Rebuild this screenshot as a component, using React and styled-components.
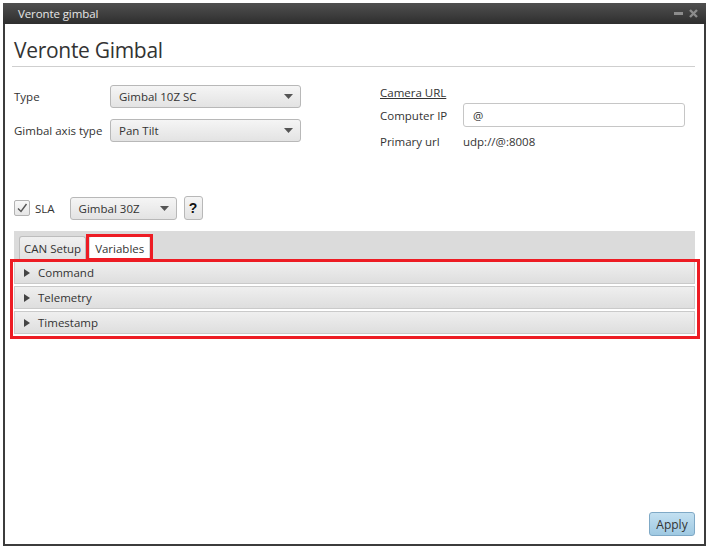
import styled, { createGlobalStyle } from "styled-components";

const GlobalStyle = createGlobalStyle`
  html, body {
    margin: 0;
    padding: 0;
    background: #ffffff;
  }
  body {
    font-family: "Open Sans", "Noto Sans", sans-serif;
    color: #333;
  }
`;

const Caret = () => (
  <svg width="9" height="5" viewBox="0 0 9 5">
    <path d="M0 0 L9 0 L4.5 5 Z" fill="#555" />
  </svg>
);

const Arrow = () => (
  <svg width="6" height="8" viewBox="0 0 6 8">
    <path d="M0 0 L6 4 L0 8 Z" fill="#444" />
  </svg>
);

const Check = () => (
  <svg width="12" height="12" viewBox="0 0 12 12">
    <path d="M2 6.5 L5 9.5 L10.5 2" fill="none" stroke="#555" strokeWidth="1.4" />
  </svg>
);

const CloseIcon = () => (
  <svg width="9" height="9" viewBox="0 0 9 9">
    <path d="M1 1 L8 8 M8 1 L1 8" stroke="#8c8c8c" strokeWidth="2.4" />
  </svg>
);

const Select = ({ value, width }) => (
  <SelectBox $width={width}>
    <span>{value}</span>
    <Caret />
  </SelectBox>
);

const App = () => {
  const panes = ["Command", "Telemetry", "Timestamp"];
  return (
    <>
      <GlobalStyle />
      <Page>
        <Window>
          <TitleBar>
            <TitleText>Veronte gimbal</TitleText>
            <WindowControls>
              <Minimize />
              <CloseIcon />
            </WindowControls>
          </TitleBar>
          <Body>
            <Heading>Veronte Gimbal</Heading>
            <Divider />
            <FormRow>
              <LeftForm>
                <Label>Type</Label>
                <Select value="Gimbal 10Z SC" width={191} />
                <Label>Gimbal axis type</Label>
                <Select value="Pan Tilt" width={191} />
              </LeftForm>
              <RightForm>
                <LinkLabel>Camera URL</LinkLabel>
                <span />
                <Label>Computer IP</Label>
                <TextInput>@</TextInput>
                <Label>Primary url</Label>
                <Label>udp://@:8008</Label>
              </RightForm>
            </FormRow>
            <SlaRow>
              <CheckBox>
                <Check />
              </CheckBox>
              <Label>SLA</Label>
              <Spacer />
              <Select value="Gimbal 30Z" width={107} />
              <HelpButton>?</HelpButton>
            </SlaRow>
            <TabPane>
              <TabHeader>
                <Tab>CAN Setup</Tab>
                <Tab $selected>
                  Variables
                  <Highlight $inset="-3px -5px -2px -5px" />
                </Tab>
              </TabHeader>
              <Accordion>
                {panes.map((p) => (
                  <Titled key={p}>
                    <Arrow />
                    <span>{p}</span>
                  </Titled>
                ))}
                <Highlight $inset="-2px -5px -5px -4px" />
              </Accordion>
            </TabPane>
            <Footer>
              <ApplyButton>Apply</ApplyButton>
            </Footer>
          </Body>
        </Window>
      </Page>
    </>
  );
};

const Page = styled.div`
  width: 709px;
  height: 550px;
  padding: 3px 3px 4px 3px;
  box-sizing: border-box;
`;

const Window = styled.div`
  height: 543px;
  border: 2px solid #3c3c3c;
  border-top: none;
  box-sizing: border-box;
  display: flex;
  flex-direction: column;
  background: #fff;
`;

const TitleBar = styled.div`
  height: 21px;
  margin: 0 -2px;
  background: linear-gradient(#505050, #2e2e2e);
  display: flex;
  align-items: center;
  justify-content: space-between;
  padding: 0 8px 0 15px;
`;

const TitleText = styled.span`
  color: #e6e6e6;
  font-size: 11.5px;
  letter-spacing: -0.1px;
`;

const WindowControls = styled.div`
  display: flex;
  align-items: center;
  gap: 6px;
`;

const Minimize = styled.div`
  width: 9px;
  height: 3px;
  background: #8c8c8c;
`;

const Body = styled.div`
  flex: 1;
  display: flex;
  flex-direction: column;
  padding: 12px 9px 8px 9px;
`;

const Heading = styled.h1`
  margin: 0;
  font-size: 21px;
  font-weight: 400;
  color: #333;
  line-height: 28px;
  letter-spacing: -0.3px;
`;

const Divider = styled.div`
  height: 1px;
  background: #cfcfcf;
  margin: 2px 0 0 -2px;
`;

const FormRow = styled.div`
  display: flex;
  margin-top: 18px;
`;

const LeftForm = styled.div`
  display: grid;
  grid-template-columns: 96px auto;
  row-gap: 11px;
  align-items: center;
  width: 366px;
  align-content: start;
`;

const RightForm = styled.div`
  display: grid;
  grid-template-columns: 83px 222px;
  grid-template-rows: 19px 24px 26px;
  row-gap: 1px;
  align-items: center;
  margin-top: -2px;
`;

const Label = styled.span`
  font-size: 11.5px;
  color: #333;
  white-space: nowrap;
`;

const LinkLabel = styled(Label)`
  text-decoration: underline;
`;

const SelectBox = styled.div`
  width: ${(p) => p.$width}px;
  height: 23px;
  box-sizing: border-box;
  border: 1px solid #b8b8b8;
  border-radius: 3px;
  background: linear-gradient(#f5f5f5, #e3e3e3);
  display: flex;
  align-items: center;
  justify-content: space-between;
  padding: 0 7px 0 8px;
  font-size: 11.5px;
  color: #333;
`;

const TextInput = styled.div`
  height: 24px;
  box-sizing: border-box;
  border: 1px solid #c6c6c6;
  border-radius: 3px;
  background: #fff;
  font-size: 11.5px;
  padding: 0 9px;
  display: flex;
  align-items: center;
`;

const SlaRow = styled.div`
  display: flex;
  align-items: center;
  margin-top: 42px;
  gap: 5px;
`;

const CheckBox = styled.div`
  width: 16px;
  height: 16px;
  box-sizing: border-box;
  border: 1px solid #b3b3b3;
  border-radius: 2px;
  background: linear-gradient(#f8f8f8, #e6e6e6);
  display: flex;
  align-items: center;
  justify-content: center;
`;

const Spacer = styled.div`
  width: 5px;
`;

const HelpButton = styled.div`
  width: 19px;
  height: 24px;
  box-sizing: border-box;
  margin-left: 2px;
  border: 1px solid #b8b8b8;
  border-radius: 3px;
  background: linear-gradient(#f5f5f5, #e3e3e3);
  display: flex;
  align-items: center;
  justify-content: center;
  font-family: "Liberation Sans", sans-serif;
  font-weight: 700;
  font-size: 14px;
  color: #111;
`;

const TabPane = styled.div`
  margin-top: 11px;
  display: flex;
  flex-direction: column;
`;

const TabHeader = styled.div`
  height: 28px;
  background: #dbdbdb;
  display: flex;
  align-items: flex-end;
  gap: 4px;
  padding-left: 5px;
  box-sizing: border-box;
`;

const Tab = styled.div`
  position: relative;
  height: 23px;
  box-sizing: border-box;
  padding: 0 4px;
  display: flex;
  align-items: center;
  font-size: 11.5px;
  color: #333;
  border: 1px solid ${(p) => (p.$selected ? "#fff" : "#bdbdbd")};
  border-bottom: none;
  border-radius: 3px 3px 0 0;
  background: ${(p) => (p.$selected ? "#fff" : "linear-gradient(#f0f0f0, #e2e2e2)")};
`;

const Accordion = styled.div`
  position: relative;
  display: flex;
  flex-direction: column;
  gap: 2px;
  margin-top: 2px;
`;

const Titled = styled.div`
  height: 23px;
  box-sizing: border-box;
  border: 1px solid #cacaca;
  background: linear-gradient(#efefef, #dedede);
  display: flex;
  align-items: center;
  gap: 8px;
  padding-left: 9px;
  font-size: 11.5px;
  color: #333;
`;

const Highlight = styled.div`
  position: absolute;
  inset: ${(p) => p.$inset};
  border: 3px solid #ed1c24;
  pointer-events: none;
`;

const Footer = styled.div`
  margin-top: auto;
  display: flex;
  justify-content: flex-end;
`;

const ApplyButton = styled.div`
  width: 46px;
  height: 24px;
  box-sizing: border-box;
  border: 1px solid #7fa9c6;
  border-radius: 3px;
  background: linear-gradient(#c3e0f1, #9fc9e2);
  display: flex;
  align-items: center;
  justify-content: center;
  font-size: 12px;
  color: #333;
`;

export default App;
